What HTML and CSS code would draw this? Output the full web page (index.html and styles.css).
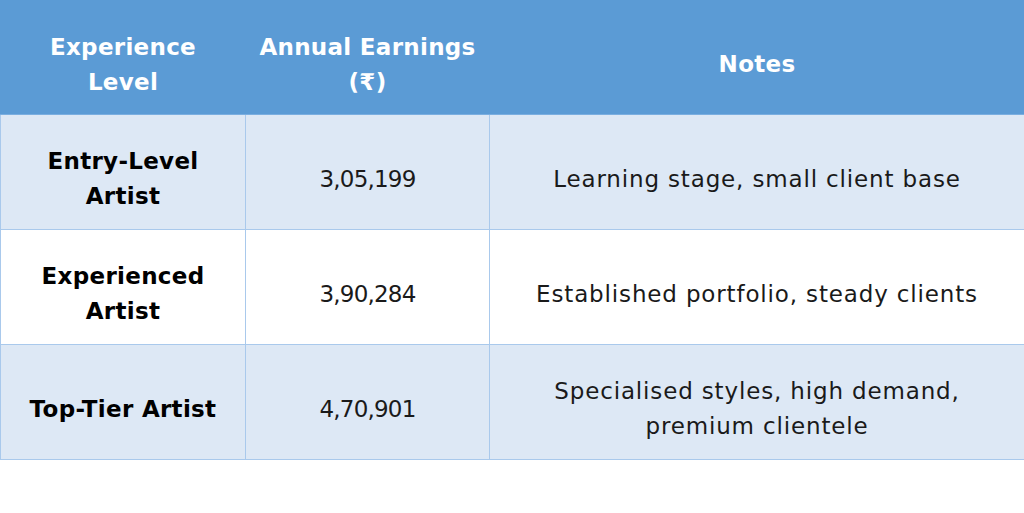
FILE: index.html
```html
<!DOCTYPE html>
<html>
<head>
<meta charset="utf-8">
<link rel="stylesheet" href="styles.css">
</head>
<body>
<table class="tbl">
  <colgroup>
    <col class="c1"><col class="c2"><col class="c3">
  </colgroup>
  <thead>
    <tr>
      <th>Experience<br>Level</th>
      <th>Annual Earnings<br>(₹)</th>
      <th>Notes</th>
    </tr>
  </thead>
  <tbody>
    <tr class="alt">
      <td class="lvl">Entry-Level<br>Artist</td>
      <td class="num">3,05,199</td>
      <td>Learning stage, small client base</td>
    </tr>
    <tr>
      <td class="lvl">Experienced<br>Artist</td>
      <td class="num">3,90,284</td>
      <td>Established portfolio, steady clients</td>
    </tr>
    <tr class="alt">
      <td class="lvl">Top-Tier Artist</td>
      <td class="num">4,70,901</td>
      <td>Specialised styles, high demand,<br>premium clientele</td>
    </tr>
  </tbody>
</table>
</body>
</html>
```
FILE: styles.css
```css
html, body {
  margin: 0;
  padding: 0;
  background: #ffffff;
}
.tbl {
  width: 1024px;
  border-collapse: collapse;
  table-layout: fixed;
  font-family: "DejaVu Sans", "Open Sans", sans-serif;
  font-size: 23px;
  letter-spacing: 0.85px;
  line-height: 35px;
  color: #1a1a1a;
}
.c1 { width: 245px; }
.c2 { width: 244px; }
.c3 { width: 535px; }
.tbl th {
  background: #5b9bd5;
  color: #ffffff;
  font-weight: 700;
  letter-spacing: 0.3px;
  height: 99px;
  padding: 14px 0 0 0;
  text-align: center;
  vertical-align: middle;
  border: 1px solid #5b9bd5;
  border-bottom: 1px solid #7aaee0;
}
.tbl td {
  height: 100px;
  padding: 14px 0 0 0;
  text-align: center;
  vertical-align: middle;
  border: 1px solid #a9c9ec;
  background: #ffffff;
}
.tbl tr.alt td {
  background: #dde8f5;
}
.tbl td.lvl {
  font-weight: 700;
  letter-spacing: 0.3px;
  color: #000000;
}
.tbl td.num {
  letter-spacing: -0.8px;
}
```
